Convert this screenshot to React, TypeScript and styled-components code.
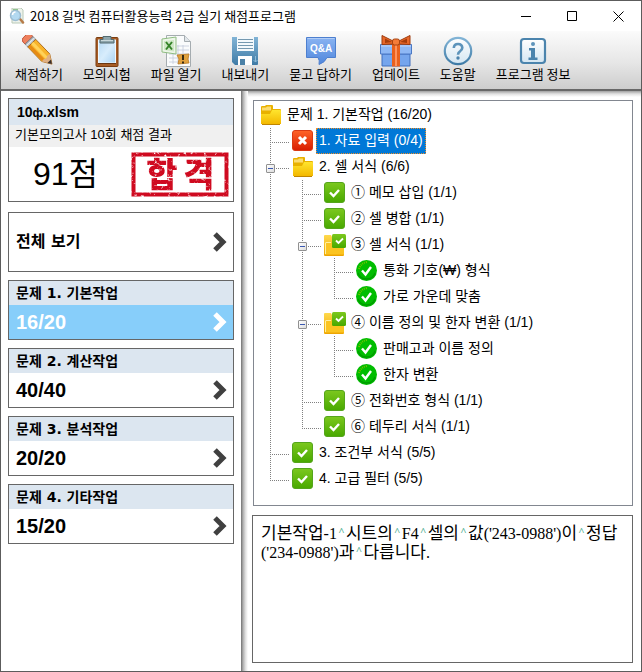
import React from "react";
import styled, { createGlobalStyle, css } from "styled-components";

const sans = `"Liberation Sans", "Noto Sans CJK KR", sans-serif`;
const korean = `"Noto Sans CJK KR", sans-serif`;
const wide = `"DejaVu Sans", "Noto Sans CJK KR", sans-serif`;
const serif = `"Liberation Serif", "Noto Sans CJK KR", serif`;

const GlobalStyle = createGlobalStyle`
  * { box-sizing: border-box; }
  body { margin: 0; background: #fff; color: #000; font-family: ${sans}; }
  button { font: inherit; color: inherit; background: none; border: 0; padding: 0; margin: 0; cursor: pointer; }
  ul { list-style: none; margin: 0; padding: 0; }
  h1, h2, p { margin: 0; font: inherit; }
  svg { display: block; flex: none; }
`;

const Window = styled.div`
  display: flex;
  flex-direction: column;
  min-height: 100vh;
  border: 1px solid #5c5c5c;
  background: #fff;
`;

const TitleBar = styled.header`
  display: flex;
  align-items: center;
  gap: 5px;
  height: 30px;
  padding-left: 8px;
`;

const Title = styled.h1`
  flex: 1;
  font-family: ${korean};
  font-size: 13px;
  line-height: 20px;
  white-space: nowrap;
`;

const WindowControls = styled.div`
  display: flex;
`;

const WindowButton = styled.button`
  display: grid;
  place-items: center;
  width: 46px;
  height: 29px;
`;

const Toolbar = styled.nav`
  display: flex;
  align-items: flex-start;
  gap: 20px;
  height: 58px;
  padding: 4px 14px 0;
  background: linear-gradient(#fbfbfb, #e6e6e6 55%, #cdcdcd);
`;

const ToolButton = styled.button`
  display: flex;
  flex-direction: column;
  align-items: center;
  font-family: ${korean};
  font-size: 13px;
  line-height: 14px;
  white-space: nowrap;
`;

const Body = styled.div`
  display: flex;
  flex: 1;
  border-top: 2px solid #686868;
`;

const Sidebar = styled.aside`
  display: flex;
  flex-direction: column;
  gap: 8px;
  flex: 0 0 240px;
  padding: 7px 7px 8px;
`;

const Divider = styled.div`
  flex: 0 0 7px;
  background: linear-gradient(to right, #707070, #b0b0b0 30%, #e0e0e0 65%, #fff);
`;

const Main = styled.main`
  display: flex;
  flex-direction: column;
  gap: 9px;
  flex: 1;
  min-width: 0;
  padding: 9px 8px 8px 4px;
  background: linear-gradient(#a0a0a0, #e2e2e2 3px, #fff 6px);
`;

const Card = styled.section`
  display: flex;
  flex-direction: column;
  border: 1px solid #666;
  background: #fff;
`;

const ResultCard = styled(Card)`
  margin-bottom: 2px;
`;

const FileName = styled.h2`
  height: 26px;
  padding: 0 8px;
  background: #dce6f0;
  font-size: 14px;
  font-weight: 700;
  line-height: 26px;
`;

const SmallGlyph = styled.span`
  font-size: 12px;
`;

const ResultCaption = styled.p`
  height: 22px;
  padding-left: 6px;
  background: #f0f0f0;
  font-size: 13px;
  line-height: 20px;
`;

const ResultScore = styled.div`
  display: flex;
  align-items: center;
  justify-content: space-between;
  height: 54px;
  padding: 0 4px 0 24px;
  font-size: 32px;
  line-height: 48px;
`;

const NavCard = styled.button`
  display: flex;
  flex-direction: column;
  height: 60px;
  border: 1px solid #666;
  background: #fff;
  text-align: left;
`;

const NavHeader = styled.span`
  width: 100%;
  height: 24px;
  padding-left: 7px;
  background: #dce6f0;
  font-family: ${wide};
  font-size: 14px;
  font-weight: 700;
  line-height: 24px;
`;

const NavBody = styled.span<{ $active?: boolean; $all?: boolean }>`
  display: flex;
  align-items: center;
  justify-content: space-between;
  flex: 1;
  width: 100%;
  padding: 0 6px 0 7px;
  font-size: 20px;
  font-weight: 700;
  line-height: 24px;
  color: ${(p) => (p.$active ? "#fff" : "#000")};
  background: ${(p) => (p.$active ? "#87cefa" : "#fff")};
  svg { color: ${(p) => (p.$active ? "#fff" : "#404040")}; }
  ${(p) => p.$all && css`
    font-family: ${wide};
    font-size: 16px;
  `}
`;

const TreePanel = styled.section`
  margin-left: 1px;
  padding: 1px 6px 13px;
  border: 1px solid #828790;
  background: #fff;
`;

const TreeRow = styled.div`
  display: flex;
  align-items: center;
  height: 26px;
  font-size: 14px;
  line-height: 24px;
  white-space: nowrap;
`;

type GuideKind = "blank" | "line" | "tee" | "elbow";

const dotsDown = "repeating-linear-gradient(to bottom, #808080 0 1px, transparent 1px 2px)";
const dotsAcross = "repeating-linear-gradient(to right, #808080 0 1px, transparent 1px 2px)";

const Guide = styled.span<{ $kind: GuideKind }>`
  display: flex;
  align-items: center;
  flex: 0 0 32px;
  height: 26px;
  padding: 2px 0 0 6px;
  background-repeat: no-repeat;
  ${(p) => p.$kind === "line" && css`
    background-image: ${dotsDown};
    background-size: 1px 26px;
    background-position: 10px 0;
  `}
  ${(p) => (p.$kind === "tee" || p.$kind === "elbow") && css`
    background-image: ${dotsDown}, ${dotsAcross};
    background-size: 1px ${p.$kind === "tee" ? 26 : 14}px, 19px 1px;
    background-position: 10px 0, 10px 14px;
  `}
`;

const Toggle = styled.button`
  display: grid;
  place-items: center;
  width: 9px;
  height: 9px;
  border: 1px solid #919191;
  border-radius: 1px;
  background: linear-gradient(135deg, #fff, #ddd);
  &::before {
    content: "";
    width: 5px;
    height: 1px;
    background: #3b58b0;
  }
`;

const NodeLabel = styled.button<{ $selected?: boolean }>`
  height: 26px;
  margin-left: 2px;
  padding: 0 3px 2px;
  ${(p) => p.$selected && css`
    background: #0078d7;
    color: #fff;
    outline: 1px dotted #f0902a;
    outline-offset: -1px;
  `}
`;

const DetailPanel = styled.section`
  flex: 1;
  min-height: 100px;
  padding: 8px;
  border: 1px solid #666;
  background: #fff;
  font-family: ${serif};
  font-size: 16px;
  line-height: 19px;
`;

const Hangul = styled.span`
  font-size: 17px;
  line-height: 1;
`;

const SpaceMark = styled.span`
  display: inline-block;
  width: 9px;
  text-align: center;
  font-size: 11px;
  font-weight: 700;
  line-height: 1;
  vertical-align: 4px;
  color: #4fae90;
`;

/* ---------- drawings ---------- */

const Gradients = () => (
  <svg width="0" height="0" aria-hidden="true">
    <defs>
      <linearGradient id="steel" x1="0" y1="0" x2="0" y2="1">
        <stop offset="0" stopColor="#82b4d6" /><stop offset="1" stopColor="#3f7ba6" />
      </linearGradient>
      <linearGradient id="pale" x1="0" y1="0" x2="0" y2="1">
        <stop offset="0" stopColor="#fff" /><stop offset="1" stopColor="#d4e6f2" />
      </linearGradient>
      <linearGradient id="clip" x1="0" y1="0" x2="1" y2="1">
        <stop offset="0" stopColor="#b5d9f3" /><stop offset="0.5" stopColor="#d8edfc" /><stop offset="1" stopColor="#a9d2f2" />
      </linearGradient>
      <linearGradient id="bubble" x1="0" y1="0" x2="0" y2="1">
        <stop offset="0" stopColor="#8ab4f2" /><stop offset="1" stopColor="#4f86dc" />
      </linearGradient>
      <linearGradient id="folder" x1="0" y1="0" x2="0" y2="1">
        <stop offset="0" stopColor="#ffe52e" /><stop offset="1" stopColor="#f3b800" />
      </linearGradient>
      <linearGradient id="amber" x1="0" y1="0" x2="0" y2="1">
        <stop offset="0" stopColor="#ffd94c" /><stop offset="1" stopColor="#eda400" />
      </linearGradient>
      <linearGradient id="green" x1="0" y1="0" x2="0" y2="1">
        <stop offset="0" stopColor="#7cc81e" /><stop offset="1" stopColor="#48a800" />
      </linearGradient>
      <linearGradient id="red" x1="0" y1="0" x2="0" y2="1">
        <stop offset="0" stopColor="#ff6428" /><stop offset="1" stopColor="#d81c00" />
      </linearGradient>
      <filter id="worn" x="0" y="0" width="100%" height="100%" colorInterpolationFilters="sRGB">
        <feTurbulence type="fractalNoise" baseFrequency="0.3" numOctaves="3" seed="7" result="noise" />
        <feColorMatrix in="noise" type="matrix" values="0 0 0 0 0  0 0 0 0 0  0 0 0 0 0  -4 0 0 0 3.4" result="mask" />
        <feComposite in="SourceGraphic" in2="mask" operator="in" />
      </filter>
    </defs>
  </svg>
);

const AppIcon = () => (
  <svg width="16" height="16" viewBox="0 0 16 16">
    <path d="M3 0h9l2 2v13H3z" fill="#eef3ec" stroke="#b9c9b8" />
    <path d="M4 1h5v3H4z" fill="#8fc38b" />
    <path d="M11 11l3 3.500" stroke="#b77b48" strokeWidth="2.500" strokeLinecap="round" />
    <circle cx="6.500" cy="7.500" r="5" fill="#b3d9f0" stroke="#9dbdd2" strokeWidth="1.500" />
    <path d="M3.500 7a3 3 0 0 1 3-3" stroke="#fff" strokeWidth="1.500" fill="none" />
  </svg>
);

const PencilIcon = () => (
  <svg width="34" height="32" viewBox="0 0 34 32">
    <g transform="translate(6 5) rotate(-44)">
      <path d="M-5 1V-2Q-5-5-2-5H3Q6-5 6-2V1z" fill="#ee805d" stroke="#b5482d" strokeWidth="0.800" />
      <path d="M-5 1H6V5H-5z" fill="#b5bdc4" stroke="#66727b" strokeWidth="0.700" />
      <path d="M-5 3H6" stroke="#eef2f4" />
      <path d="M-5 5H6V25L.5 34-5 25z" fill="#f8b32a" stroke="#a45e0d" strokeWidth="0.800" />
      <path d="M-4.500 5h3v21l-3-1z" fill="#e68a13" />
      <path d="M-.5 5h3v21h-3z" fill="#ffd25a" />
      <path d="M-5 25Q-2 24 .5 26 3 24 6 25L.5 34z" fill="#dfb084" />
      <path d="M-2 30h5L.5 34z" fill="#3a302c" />
    </g>
  </svg>
);

const ClipboardIcon = () => (
  <svg width="32" height="32" viewBox="0 0 32 32">
    <rect x="5" y="2.500" width="22" height="29" rx="1" fill="#a65c25" stroke="#7b3d10" />
    <rect x="7.500" y="5" width="17" height="23" fill="url(#clip)" stroke="#eef8ff" />
    <path d="M7 28.500h18" stroke="#6b3712" />
    <path d="M12 1.500h8v3h3v3.500H9V4.500h3z" fill="#8ea6ac" stroke="#536b70" />
    <path d="M10 5.500h12" stroke="#c9d8da" />
  </svg>
);

const SheetIcon = () => (
  <svg width="32" height="32" viewBox="0 0 32 32">
    <path d="M6.500.5h18l6 6v25h-24z" fill="#fafbfc" stroke="#a5acb0" />
    <path d="M24.500.5v6h6" fill="#e1e6ea" stroke="#a5acb0" />
    <path d="M9 19h20M9 23h20M9 27h20M13 10v19M18 10v19M23 10v19M17 11h12M17 15h12" stroke="#c3ccdb" strokeWidth="0.800" />
    <path d="M2 4l14-2v17L2 17z" fill="#edf6e9" stroke="#8fbd82" />
    <path d="M4 6l10-1v11.500L4 15z" fill="#cfe7c6" />
    <path d="M6 7l6 7.500M12 7l-6 7.500" stroke="#348328" strokeWidth="2" />
    <path d="M17 20l12-1-1 5 1 4-11 1 1-5z" fill="#e1a23e" stroke="#b97720" strokeWidth="0.800" />
    <path d="M23 20v5M23 26.500v2" stroke="#3a2d12" strokeWidth="2" />
  </svg>
);

const SaveIcon = () => (
  <svg width="32" height="32" viewBox="0 0 32 32">
    <path d="M3 2h26v27q0 1-1 1H6l-3-3z" fill="url(#steel)" />
    <path d="M8 2h17v14H8z" fill="#f4f9fc" />
    <path d="M9 4.500h15M9 7.500h15M9 10.500h15M9 13.500h15" stroke="#7599b0" />
    <path d="M9 21h14v9H9z" fill="#fff" />
    <path d="M11 24h5v6h-5z" fill="#4b81a7" />
    <path d="M26.500 21v6M24.500 25l2 2 2-2" stroke="#8dbbd8" fill="none" />
  </svg>
);

const QaText = styled.text`
  font: 700 10px ${sans};
  fill: #fff;
`;

const QaIcon = () => (
  <svg width="32" height="32" viewBox="0 0 32 32">
    <path d="M1.500 2.500h29v20H22q-2 5-8 7 1-4-1-7H1.500z" fill="url(#bubble)" stroke="#4d7fcf" />
    <path d="M2.500 3.500h27" stroke="#b1cdf7" />
    <QaText x="16" y="17" textAnchor="middle">Q&amp;A</QaText>
  </svg>
);

const GiftIcon = () => (
  <svg width="34" height="32" viewBox="0 0 34 32">
    <path d="M3 19h28v12H3z" fill="#75a5ed" stroke="#416fbd" />
    <path d="M1.500 9.500h31V19h-31z" fill="#8fb8f5" stroke="#4b79c5" />
    <path d="M2 11h30" stroke="#bfd7fb" />
    <path d="M13 9h8v22.500h-8z" fill="#e9611d" />
    <path d="M16 9h2v22h-2z" fill="#ff935c" />
    <path d="M16 7L3 0.500v9L16 9zM18 7L31 .5v9L18 9z" fill="#e8682a" stroke="#9d3b0c" />
    <path d="M6 3.500l7 3.500-7 1zM28 3.500L21 7l7 1z" fill="#a63d0b" />
    <rect x="13.500" y="4" width="7" height="6" rx="2" fill="#f57c39" stroke="#a64413" />
  </svg>
);

const HelpIcon = () => (
  <svg width="32" height="32" viewBox="0 0 32 32">
    <circle cx="16" cy="16" r="13.200" fill="url(#pale)" stroke="url(#steel)" strokeWidth="2.200" />
    <path d="M11.800 13Q12 9 16 9t4.300 3.700q0 2-2.300 3.600-2 1.300-2 3.400" fill="none" stroke="#5d94bb" strokeWidth="2.600" />
    <circle cx="16" cy="23" r="1.700" fill="#4b84ad" />
  </svg>
);

const InfoIcon = () => (
  <svg width="32" height="32" viewBox="0 0 32 32">
    <rect x="4" y="4" width="24" height="24" rx="3" fill="url(#pale)" stroke="#4b84ad" strokeWidth="2.200" />
    <circle cx="16" cy="9" r="2" fill="#5d94bb" />
    <path d="M12 13h6v9.500h2.500V25h-9v-2.500H14v-7h-2z" fill="#4b84ad" />
  </svg>
);

const Chevron = () => (
  <svg width="14" height="20" viewBox="0 0 14 20">
    <path d="M2 2l8 8-8 8" fill="none" stroke="currentColor" strokeWidth="5" />
  </svg>
);

const FolderIcon = () => (
  <svg width="22" height="22" viewBox="0 0 22 22">
    <path d="M1 3q0-1 1-1h3l1-1h6q1 0 1 1v3h7q1 0 1 1v14H1z" fill="#e8b100" />
    <path d="M2 3.500h4l1-1h4v4H2z" fill="#fbdc70" />
    <path d="M1 10h9l2-4h8q1 0 1 1v12q0 1-1 1H2q-1 0-1-1z" fill="url(#folder)" />
    <path d="M2 20.500h18" stroke="#bf8500" />
  </svg>
);

const CheckedFolderIcon = () => (
  <svg width="22" height="22" viewBox="0 0 22 22">
    <path d="M0 2q0-1 1-1h6l1 2v3h12v15q0 1-1 1H1q-1 0-1-1z" fill="url(#amber)" />
    <path d="M3 9h5v5H20v6.500H1V12z" fill="#fbc421" />
    <path d="M2 8.500h5M1.500 8.500V20" stroke="#fff0a0" />
    <rect x="8" y="0" width="14" height="14" rx="1.500" fill="url(#green)" />
    <path d="M12 6.500l2.500 2.500L19 4.500" fill="none" stroke="#fff" strokeWidth="1.800" />
  </svg>
);

const SquareCheckIcon = () => (
  <svg width="22" height="22" viewBox="0 0 22 22">
    <rect x="0.500" y="0.500" width="20" height="20" rx="2.500" fill="url(#green)" stroke="#55a51c" />
    <path d="M6 10.500l3.500 3.500L15 8" fill="none" stroke="#fff" strokeWidth="2.400" />
  </svg>
);

const RoundCheckIcon = () => (
  <svg width="22" height="22" viewBox="0 0 22 22">
    <circle cx="10.500" cy="10.500" r="10.500" fill="#00bd00" />
    <path d="M2 13a9 9 0 0 0 17 0" fill="none" stroke="#009c00" strokeWidth="1.500" />
    <path d="M3 9Q5 3 11 2" fill="none" stroke="#6fc400" strokeWidth="2" strokeDasharray="1 1" />
    <path d="M6 10.500l3.500 4 5.500-7.500" fill="none" stroke="#fff" strokeWidth="2.400" />
  </svg>
);

const ErrorIcon = () => (
  <svg width="22" height="22" viewBox="0 0 22 22">
    <rect x="0.500" y="0.500" width="20" height="20" rx="2.500" fill="url(#red)" stroke="#d83a14" />
    <path d="M7 7l7 7M14 7l-7 7" stroke="#fff" strokeWidth="3" />
  </svg>
);

const StampText = styled.text`
  font: 900 34px ${korean};
  fill: #cf0a20;
`;

const PassStamp = () => (
  <svg width="98" height="54" viewBox="0 -5 98 54" role="img" aria-label="합격">
    <g filter="url(#worn)">
      <rect x="2.500" y="2.500" width="93" height="40" fill="none" stroke="#cf0a20" strokeWidth="4" />
      <rect y="-5" width="98" height="54" fill="none" />
      <StampText x="31" y="35" textAnchor="middle">합</StampText>
      <StampText x="68" y="35" textAnchor="middle">격</StampText>
    </g>
  </svg>
);

/* ---------- data ---------- */

const tools = [
  { label: "채점하기", Icon: PencilIcon },
  { label: "모의시험", Icon: ClipboardIcon },
  { label: "파일 열기", Icon: SheetIcon },
  { label: "내보내기", Icon: SaveIcon },
  { label: "묻고 답하기", Icon: QaIcon },
  { label: "업데이트", Icon: GiftIcon },
  { label: "도움말", Icon: HelpIcon },
  { label: "프로그램 정보", Icon: InfoIcon },
];

const problems = [
  { title: "문제 1. 기본작업", score: "16/20", active: true },
  { title: "문제 2. 계산작업", score: "40/40" },
  { title: "문제 3. 분석작업", score: "20/20" },
  { title: "문제 4. 기타작업", score: "15/20" },
];

interface TreeNode {
  label: string;
  Icon: React.FC;
  selected?: boolean;
  children?: TreeNode[];
}

const tree: TreeNode = {
  label: "문제 1. 기본작업 (16/20)",
  Icon: FolderIcon,
  children: [
    { label: "1. 자료 입력 (0/4)", Icon: ErrorIcon, selected: true },
    {
      label: "2. 셀 서식 (6/6)",
      Icon: FolderIcon,
      children: [
        { label: "① 메모 삽입 (1/1)", Icon: SquareCheckIcon },
        { label: "② 셀 병합 (1/1)", Icon: SquareCheckIcon },
        {
          label: "③ 셀 서식 (1/1)",
          Icon: CheckedFolderIcon,
          children: [
            { label: "통화 기호(₩) 형식", Icon: RoundCheckIcon },
            { label: "가로 가운데 맞춤", Icon: RoundCheckIcon },
          ],
        },
        {
          label: "④ 이름 정의 및 한자 변환 (1/1)",
          Icon: CheckedFolderIcon,
          children: [
            { label: "판매고과 이름 정의", Icon: RoundCheckIcon },
            { label: "한자 변환", Icon: RoundCheckIcon },
          ],
        },
        { label: "⑤ 전화번호 형식 (1/1)", Icon: SquareCheckIcon },
        { label: "⑥ 테두리 서식 (1/1)", Icon: SquareCheckIcon },
      ],
    },
    { label: "3. 조건부 서식 (5/5)", Icon: SquareCheckIcon },
    { label: "4. 고급 필터 (5/5)", Icon: SquareCheckIcon },
  ],
};

const Branch = ({ node, guides }: { node: TreeNode; guides: GuideKind[] }) => {
  const inherited = guides.map((g): GuideKind => (g === "tee" || g === "line" ? "line" : "blank"));
  const children = node.children ?? [];
  return (
    <li>
      <TreeRow>
        {guides.map((kind, i) => (
          <Guide key={i} $kind={kind}>
            {i === guides.length - 1 && children.length > 0 && <Toggle aria-label={`${node.label} 접기`} />}
          </Guide>
        ))}
        <node.Icon />
        <NodeLabel $selected={node.selected}>{node.label}</NodeLabel>
      </TreeRow>
      {children.length > 0 && (
        <ul>
          {children.map((child, i) => (
            <Branch key={child.label} node={child} guides={[...inherited, i === children.length - 1 ? "elbow" : "tee"]} />
          ))}
        </ul>
      )}
    </li>
  );
};

const Mark = () => <SpaceMark>^</SpaceMark>;

export default function App() {
  return (
    <>
      <GlobalStyle />
      <Window>
        <TitleBar>
          <AppIcon />
          <Title>2018 길벗 컴퓨터활용능력 2급 실기 채점프로그램</Title>
          <WindowControls>
            <WindowButton aria-label="최소화">
              <svg width="11" height="11" viewBox="0 0 11 11"><path d="M0 5.500h10" stroke="#000" /></svg>
            </WindowButton>
            <WindowButton aria-label="최대화">
              <svg width="11" height="11" viewBox="0 0 11 11"><path d="M.5.5h9v9h-9z" fill="none" stroke="#000" /></svg>
            </WindowButton>
            <WindowButton aria-label="닫기">
              <svg width="11" height="11" viewBox="0 0 11 11"><path d="M.5.5l10 10M10.500.5l-10 10" stroke="#000" /></svg>
            </WindowButton>
          </WindowControls>
        </TitleBar>
        <Toolbar>
          {tools.map(({ label, Icon }) => (
            <ToolButton key={label}>
              <Icon />
              {label}
            </ToolButton>
          ))}
        </Toolbar>
        <Body>
          <Sidebar>
            <ResultCard>
              <FileName>10<SmallGlyph>ф</SmallGlyph>.xlsm</FileName>
              <ResultCaption>기본모의고사 10회 채점 결과</ResultCaption>
              <ResultScore>
                91점
                <PassStamp />
              </ResultScore>
            </ResultCard>
            <NavCard>
              <NavBody $all>
                전체 보기
                <Chevron />
              </NavBody>
            </NavCard>
            {problems.map((p) => (
              <NavCard key={p.title}>
                <NavHeader>{p.title}</NavHeader>
                <NavBody $active={p.active}>
                  {p.score}
                  <Chevron />
                </NavBody>
              </NavCard>
            ))}
          </Sidebar>
          <Divider />
          <Main>
            <TreePanel>
              <ul>
                <Branch node={tree} guides={[]} />
              </ul>
            </TreePanel>
            <DetailPanel>
              <p>
                <Hangul>기본작업</Hangul>-1<Mark /><Hangul>시트의</Hangul><Mark />F4<Mark />
                <Hangul>셀의</Hangul><Mark /><Hangul>값</Hangul>('243-0988')<Hangul>이</Hangul><Mark />
                <Hangul>정답</Hangul>
                <br />
                ('234-0988')<Hangul>과</Hangul><Mark /><Hangul>다릅니다</Hangul>.
              </p>
            </DetailPanel>
          </Main>
        </Body>
      </Window>
      <Gradients />
    </>
  );
}
